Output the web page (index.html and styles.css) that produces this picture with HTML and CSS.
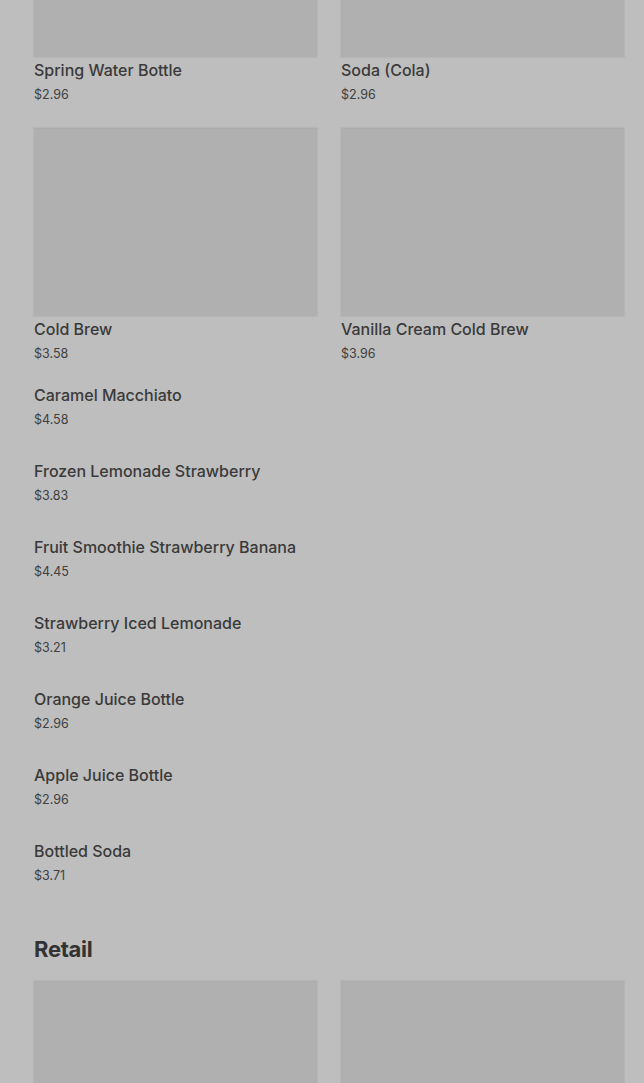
FILE: index.html
```html
<!DOCTYPE html>
<html lang="en">
<head>
<meta charset="utf-8">
<title>Menu</title>
<link rel="stylesheet" href="styles.css">
</head>
<body>
<main class="page">
  <section class="section section-drinks">
    <div class="grid">
      <article class="card">
        <div class="thumb"></div>
        <h3 class="name">Spring Water Bottle</h3>
        <p class="price">$2.96</p>
      </article>
      <article class="card">
        <div class="thumb"></div>
        <h3 class="name">Soda (Cola)</h3>
        <p class="price">$2.96</p>
      </article>
      <article class="card">
        <div class="thumb"></div>
        <h3 class="name">Cold Brew</h3>
        <p class="price">$3.58</p>
      </article>
      <article class="card">
        <div class="thumb"></div>
        <h3 class="name">Vanilla Cream Cold Brew</h3>
        <p class="price">$3.96</p>
      </article>
    </div>
    <ul class="list">
      <li class="item"><h3 class="name">Caramel Macchiato</h3><p class="price">$4.58</p></li>
      <li class="item"><h3 class="name">Frozen Lemonade Strawberry</h3><p class="price">$3.83</p></li>
      <li class="item"><h3 class="name">Fruit Smoothie Strawberry Banana</h3><p class="price">$4.45</p></li>
      <li class="item"><h3 class="name">Strawberry Iced Lemonade</h3><p class="price">$3.21</p></li>
      <li class="item"><h3 class="name">Orange Juice Bottle</h3><p class="price">$2.96</p></li>
      <li class="item"><h3 class="name">Apple Juice Bottle</h3><p class="price">$2.96</p></li>
      <li class="item"><h3 class="name">Bottled Soda</h3><p class="price">$3.71</p></li>
    </ul>
  </section>
  <section class="section">
    <h2 class="section-title">Retail</h2>
    <div class="grid">
      <article class="card">
        <div class="thumb"></div>
      </article>
      <article class="card">
        <div class="thumb"></div>
      </article>
    </div>
  </section>
</main>
</body>
</html>
```

FILE: styles.css
```css
* { box-sizing: border-box; }
html, body {
  margin: 0;
  padding: 0;
  background: #bebebe;
  height: 100%;
  overflow: hidden;
}
body {
  font-family: Inter, "Noto Sans", sans-serif;
  color: #363636;
}
.page {
  padding: 0 20px 0 34px;
}
.section-drinks {
  margin-top: -131px;
}
.grid {
  display: grid;
  grid-template-columns: 1fr 1fr;
  column-gap: 24px;
  row-gap: 23px;
}
.card {
  display: flex;
  flex-direction: column;
}
.thumb {
  height: 188px;
  background: #b0b0b0;
  box-shadow: 0 0 1px 1px rgba(0, 0, 0, 0.04);
  border-top: 1px solid #acacac;
}
.name {
  margin: 3px 0 0;
  font-size: 16px;
  line-height: 20px;
  font-weight: 500;
  color: #3a3a3a;
  letter-spacing: 0;
}
.price {
  margin: 5px 0 0;
  font-size: 12.5px;
  line-height: 20px;
  font-weight: 400;
  color: #404040;
}
.list {
  list-style: none;
  margin: 0;
  padding: 0;
}
.item {
  padding: 21px 0 10px;
}
.item .name {
  margin: 0;
}
.item .price {
  margin-top: 5px;
}
.section-title {
  margin: 37px 0 16px;
  font-size: 22px;
  line-height: 32px;
  font-weight: 700;
  color: #333333;
  letter-spacing: -0.3px;
}
```
